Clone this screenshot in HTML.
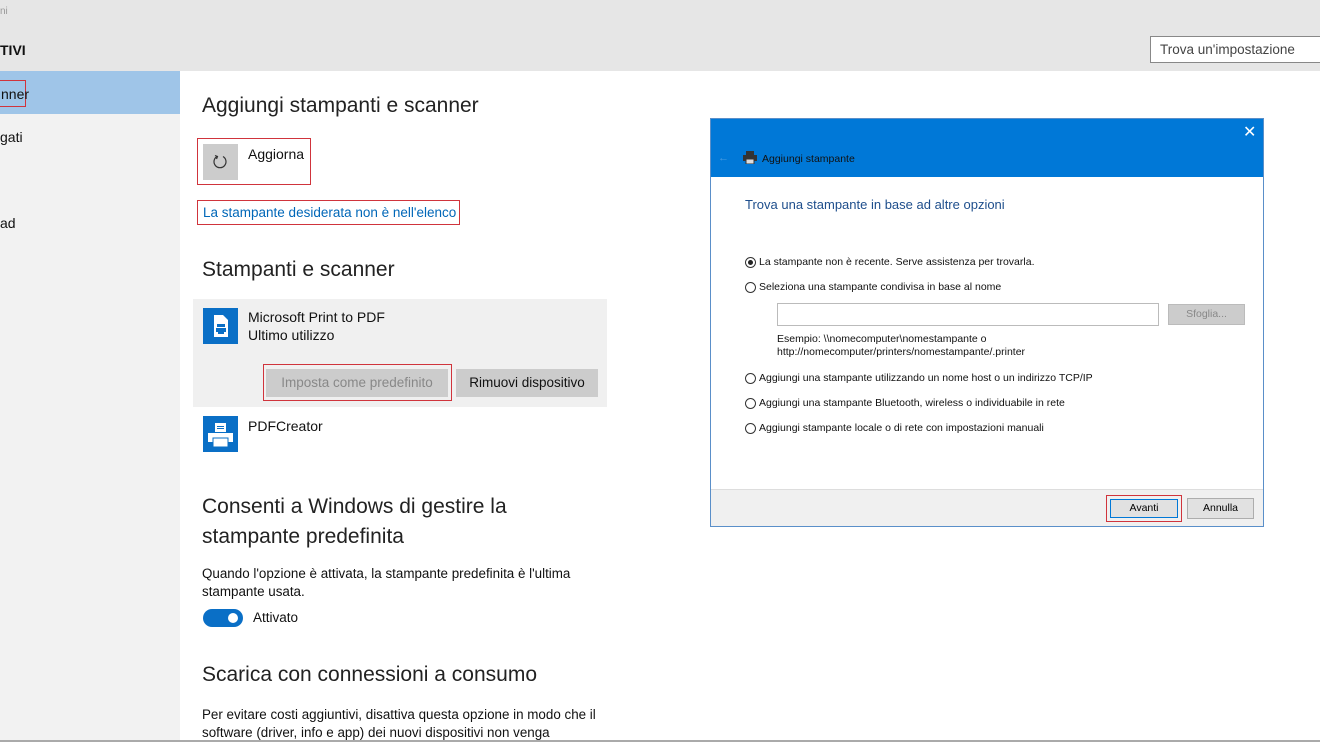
<!DOCTYPE html>
<html><head><meta charset="utf-8">
<style>
*{margin:0;padding:0;box-sizing:border-box}
body{width:1320px;height:742px;overflow:hidden;background:#fff;font-family:"Liberation Sans",sans-serif;color:#000;position:relative}
.abs{position:absolute}
.hdr{left:0;top:0;width:1320px;height:71px;background:#e6e6e6}
.side{left:0;top:71px;width:180px;height:671px;background:#f2f2f2}
.sel{left:0;top:71px;width:180px;height:43px;background:#9fc5e8}
.red{border:1px solid #d0343c}
.h1{font-size:21px;color:#222}
.t{font-size:14px;color:#111}
.link{font-size:13.5px;color:#0067b8}
.btn{background:#ccc;font-size:13.5px;text-align:center;line-height:28px}
.dlg{left:710px;top:118px;width:554px;height:409px;border:1px solid #5a8fc9;background:#fff}
.dt{font-size:10.5px;color:#111}
.radio{width:11px;height:11px;border:1px solid #333;border-radius:50%;display:inline-block;position:absolute}
</style></head><body>
<div class="abs hdr"></div>
<div class="abs" style="left:0;top:6px;font-size:10px;color:#999">ni</div>
<div class="abs" style="left:0;top:42px;font-size:14px;font-weight:bold;color:#111">TIVI</div>
<div class="abs" style="left:1150px;top:36px;width:172px;height:27px;border:1px solid #888;background:#fff;font-size:13.5px;color:#444;padding:5px 9px">Trova un'impostazione</div>
<div class="abs side"></div>
<div class="abs sel"></div>
<div class="abs red t" style="left:-2px;top:80px;width:28px;height:27px;padding:5px 0 0 2px">nner</div>
<div class="abs t" style="left:0;top:129px">gati</div>
<div class="abs t" style="left:0;top:215px">ad</div>
<div class="abs" style="left:0;top:740px;width:1320px;height:2px;background:#aaa"></div>

<div class="abs h1" style="left:202px;top:94px">Aggiungi stampanti e scanner</div>
<div class="abs red" style="left:197px;top:138px;width:114px;height:47px"></div>
<div class="abs" style="left:203px;top:144px;width:35px;height:36px;background:#ccc"></div>
<svg class="abs" style="left:211px;top:153px" width="18" height="18" viewBox="0 0 18 18"><path d="M6 3.5A6 6 0 1 0 12 3.5" fill="none" stroke="#333" stroke-width="1.2"/><path d="M4 2.5L6.5 3.5L5.5 6" fill="none" stroke="#333" stroke-width="1.2"/></svg>
<div class="abs t" style="left:248px;top:146px">Aggiorna</div>
<div class="abs red link" style="left:197px;top:200px;width:263px;height:25px;padding:4px 0 0 5px">La stampante desiderata non è nell'elenco</div>

<div class="abs h1" style="left:202px;top:258px">Stampanti e scanner</div>
<div class="abs" style="left:193px;top:299px;width:414px;height:108px;background:#f0f0f0"></div>
<div class="abs" style="left:203px;top:308px;width:35px;height:36px;background:#0a6fc6"></div>
<svg class="abs" style="left:203px;top:308px" width="35" height="36" viewBox="0 0 35 36"><path d="M11 7h9l5 5v17H11z" fill="#fff"/><rect x="14" y="16" width="8" height="3" fill="#0a6fc6"/><rect x="13" y="20" width="10" height="4" fill="#0a6fc6"/><rect x="15" y="24" width="6" height="2" fill="#0a6fc6"/></svg>
<div class="abs t" style="left:248px;top:309px">Microsoft Print to PDF</div>
<div class="abs t" style="left:248px;top:327px">Ultimo utilizzo</div>
<div class="abs red" style="left:263px;top:364px;width:189px;height:37px"></div>
<div class="abs btn" style="left:266px;top:369px;width:182px;color:#888">Imposta come predefinito</div>
<div class="abs btn" style="left:456px;top:369px;width:142px;color:#111">Rimuovi dispositivo</div>
<div class="abs" style="left:203px;top:416px;width:35px;height:36px;background:#0a6fc6"></div>
<svg class="abs" style="left:203px;top:416px" width="35" height="36" viewBox="0 0 35 36"><rect x="12" y="7" width="11" height="9" fill="#fff"/><rect x="14" y="10" width="7" height="1" fill="#0a6fc6"/><rect x="14" y="12" width="7" height="1" fill="#0a6fc6"/><rect x="5" y="17" width="25" height="9" fill="#fff"/><rect x="10" y="22" width="15" height="9" fill="#fff" stroke="#0a6fc6"/></svg>
<div class="abs t" style="left:248px;top:418px">PDFCreator</div>

<div class="abs h1" style="left:202px;top:492px;line-height:30px">Consenti a Windows di gestire la<br>stampante predefinita</div>
<div class="abs" style="left:202px;top:565px;font-size:13.4px;line-height:18px;color:#111">Quando l'opzione è attivata, la stampante predefinita è l'ultima<br>stampante usata.</div>
<div class="abs" style="left:203px;top:609px;width:40px;height:18px;border-radius:9px;background:#0a6fc6"></div>
<div class="abs" style="left:228px;top:613px;width:10px;height:10px;border-radius:50%;background:#fff"></div>
<div class="abs t" style="left:253px;top:610px;font-size:13.5px">Attivato</div>
<div class="abs h1" style="left:202px;top:663px">Scarica con connessioni a consumo</div>
<div class="abs" style="left:202px;top:706px;font-size:13.4px;line-height:18px;color:#111">Per evitare costi aggiuntivi, disattiva questa opzione in modo che il<br>software (driver, info e app) dei nuovi dispositivi non venga</div>

<div class="abs dlg">
 <div class="abs" style="left:0;top:0;width:552px;height:58px;background:#0078d7"></div>
 <div class="abs" style="left:532px;top:3px;color:#fff;font-size:16px">✕</div>
 <div class="abs" style="left:7px;top:33px;color:#4a9be0;font-size:11px">←</div>
 <svg class="abs" style="left:32px;top:32px" width="14" height="13" viewBox="0 0 14 13"><rect x="3" y="0" width="8" height="4" fill="#333"/><rect x="0" y="4" width="14" height="6" fill="#333"/><rect x="3" y="8" width="8" height="5" fill="#ddd" stroke="#333"/></svg>
 <div class="abs dt" style="left:51px;top:34px;color:#111">Aggiungi stampante</div>
 <div class="abs" style="left:34px;top:78px;font-size:13px;color:#1e4e8c">Trova una stampante in base ad altre opzioni</div>
 <span class="radio" style="left:34px;top:138px"></span><span class="abs" style="left:37px;top:141px;width:5px;height:5px;border-radius:50%;background:#222"></span>
 <div class="abs dt" style="left:48px;top:137px">La stampante non è recente. Serve assistenza per trovarla.</div>
 <span class="radio" style="left:34px;top:163px"></span>
 <div class="abs dt" style="left:48px;top:162px">Seleziona una stampante condivisa in base al nome</div>
 <div class="abs" style="left:66px;top:184px;width:382px;height:23px;border:1px solid #bbb"></div>
 <div class="abs" style="left:457px;top:185px;width:77px;height:21px;background:#ccc;border:1px solid #bbb;color:#888;font-size:10.5px;text-align:center;line-height:19px">Sfoglia...</div>
 <div class="abs dt" style="left:66px;top:214px;line-height:13px">Esempio: \\nomecomputer\nomestampante o<br>http://nomecomputer/printers/nomestampante/.printer</div>
 <span class="radio" style="left:34px;top:254px"></span>
 <div class="abs dt" style="left:48px;top:253px">Aggiungi una stampante utilizzando un nome host o un indirizzo TCP/IP</div>
 <span class="radio" style="left:34px;top:279px"></span>
 <div class="abs dt" style="left:48px;top:278px">Aggiungi una stampante Bluetooth, wireless o individuabile in rete</div>
 <span class="radio" style="left:34px;top:304px"></span>
 <div class="abs dt" style="left:48px;top:303px">Aggiungi stampante locale o di rete con impostazioni manuali</div>
 <div class="abs" style="left:0;top:370px;width:552px;height:37px;background:#f0f0f0;border-top:1px solid #ddd"></div>
 <div class="abs red" style="left:395px;top:376px;width:76px;height:27px"></div>
 <div class="abs" style="left:399px;top:380px;width:68px;height:19px;border:1px solid #0078d7;background:#e1e1e1;font-size:10.5px;text-align:center;line-height:17px">Avanti</div>
 <div class="abs" style="left:476px;top:379px;width:67px;height:21px;border:1px solid #adadad;background:#e1e1e1;font-size:10.5px;text-align:center;line-height:19px">Annulla</div>
</div>
</body></html>
